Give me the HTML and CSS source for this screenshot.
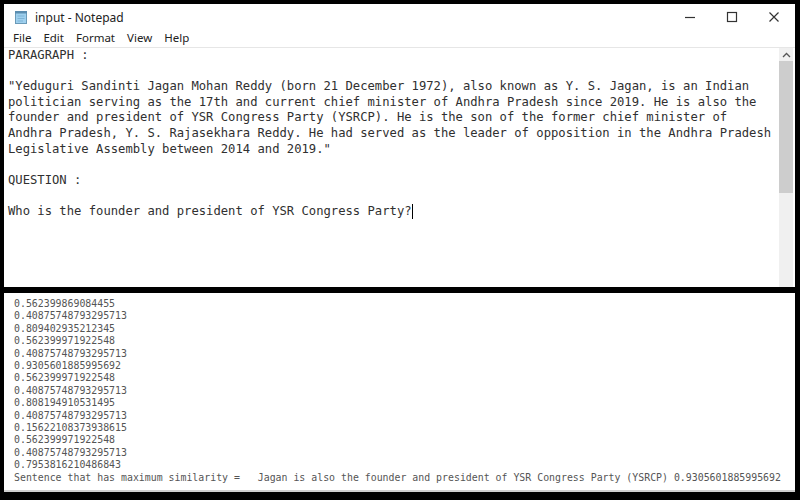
FILE: index.html
```html
<!DOCTYPE html>
<html>
<head>
<meta charset="utf-8">
<title>input - Notepad</title>
<link rel="stylesheet" href="styles.css">
</head>
<body>
<div class="screen">
  <div class="notepad">
    <div class="titlebar">
      <svg class="app-icon" width="14" height="14" viewBox="0 0 14 14">
        <rect x="1.5" y="1.5" width="11" height="12" fill="#9fd0ee" stroke="#6a9ab8" stroke-width="1"/>
        <rect x="1" y="1" width="12" height="2.5" fill="#5b8db0"/>
        <line x1="3.5" y1="6" x2="10.5" y2="6" stroke="#7fb4d6" stroke-width="1"/>
        <line x1="3.5" y1="8.5" x2="10.5" y2="8.5" stroke="#7fb4d6" stroke-width="1"/>
        <line x1="3.5" y1="11" x2="9" y2="11" stroke="#7fb4d6" stroke-width="1"/>
      </svg>
      <span class="title">input - Notepad</span>
      <div class="controls">
        <span class="ctl"><svg width="12" height="12" viewBox="0 0 12 12"><line x1="1" y1="6.5" x2="11" y2="6.5" stroke="#333" stroke-width="1.2"/></svg></span>
        <span class="ctl"><svg width="12" height="12" viewBox="0 0 12 12"><rect x="1.5" y="1.5" width="9" height="9" fill="none" stroke="#333" stroke-width="1.2"/></svg></span>
        <span class="ctl"><svg width="12" height="12" viewBox="0 0 12 12"><path d="M1.5 1.5 L10.5 10.5 M10.5 1.5 L1.5 10.5" stroke="#333" stroke-width="1.2"/></svg></span>
      </div>
    </div>
    <div class="menubar">
      <span class="menu">File</span>
      <span class="menu">Edit</span>
      <span class="menu">Format</span>
      <span class="menu">View</span>
      <span class="menu">Help</span>
    </div>
    <div class="editor">
      <pre class="text">PARAGRAPH :

"Yeduguri Sandinti Jagan Mohan Reddy (born 21 December 1972), also known as Y. S. Jagan, is an Indian
politician serving as the 17th and current chief minister of Andhra Pradesh since 2019. He is also the
founder and president of YSR Congress Party (YSRCP). He is the son of the former chief minister of
Andhra Pradesh, Y. S. Rajasekhara Reddy. He had served as the leader of opposition in the Andhra Pradesh
Legislative Assembly between 2014 and 2019."

QUESTION :

Who is the founder and president of YSR Congress Party?<span class="caret"></span></pre>
      <div class="scrollbar">
        <svg class="arrow" width="9" height="6" viewBox="0 0 9 6"><path d="M1 5 L4.5 1.5 L8 5" fill="none" stroke="#555" stroke-width="1.3"/></svg>
        <div class="thumb"></div>
      </div>
    </div>
  </div>
  <div class="console">
    <pre class="output">0.562399869084455
0.40875748793295713
0.809402935212345
0.562399971922548
0.40875748793295713
0.9305601885995692
0.562399971922548
0.40875748793295713
0.808194910531495
0.40875748793295713
0.15622108373938615
0.562399971922548
0.40875748793295713
0.7953816210486843
Sentence that has maximum similarity =   Jagan is also the founder and president of YSR Congress Party (YSRCP) 0.9305601885995692</pre>
  </div>
</div>
</body>
</html>
```
FILE: styles.css
```css
* { box-sizing: border-box; }
html, body { margin: 0; padding: 0; background: #000; }
.screen {
  width: 800px;
  height: 500px;
  background: #000;
  display: flex;
  flex-direction: column;
  gap: 6px;
  padding: 4px 5px 8px 4px;
}
.notepad {
  height: 283px;
  background: #fff;
  display: flex;
  flex-direction: column;
}
.titlebar {
  height: 26px;
  display: flex;
  align-items: center;
  padding-left: 10px;
  font-family: "Noto Sans", "Open Sans", sans-serif;
  font-size: 12px;
  color: #222;
}
.app-icon { margin-right: 7px; }
.title { flex: 1; }
.controls { display: flex; }
.ctl {
  width: 42px;
  height: 26px;
  display: flex;
  align-items: center;
  justify-content: center;
}
.menubar {
  height: 15px;
  display: flex;
  align-items: center;
  padding-left: 3px;
  font-family: "Noto Sans", "Open Sans", sans-serif;
  font-size: 11.5px;
  color: #222;
}
.menu { padding: 0 6px; }
.editor {
  flex: 1;
  display: flex;
  border-top: 1px solid #e6e6e6;
  margin-top: 2px;
  min-height: 0;
}
.text {
  flex: 1;
  margin: 0;
  padding: 0 0 0 4px;
  font-family: "DejaVu Sans Mono", monospace;
  font-size: 12.2px;
  line-height: 15.6px;
  color: #303030;
  overflow: hidden;
}
.caret {
  display: inline-block;
  width: 0;
  height: 15px;
  border-left: 1px solid #000;
  vertical-align: top;
}
.scrollbar {
  width: 14px;
  margin-right: 2px;
  background: #f0f0f0;
  display: flex;
  flex-direction: column;
  align-items: center;
}
.arrow { margin-top: 4px; margin-bottom: 3px; }
.thumb {
  width: 14px;
  height: 132px;
  background: #cdcdcd;
}
.console {
  flex: 1;
  background: #fff;
  padding: 5px 0 0 10px;
  border-bottom: 2px solid #cfcfcf;
}
.output {
  margin: 0;
  font-family: "DejaVu Sans Mono", monospace;
  font-size: 9.9px;
  line-height: 12.4px;
  color: #555;
}
```
